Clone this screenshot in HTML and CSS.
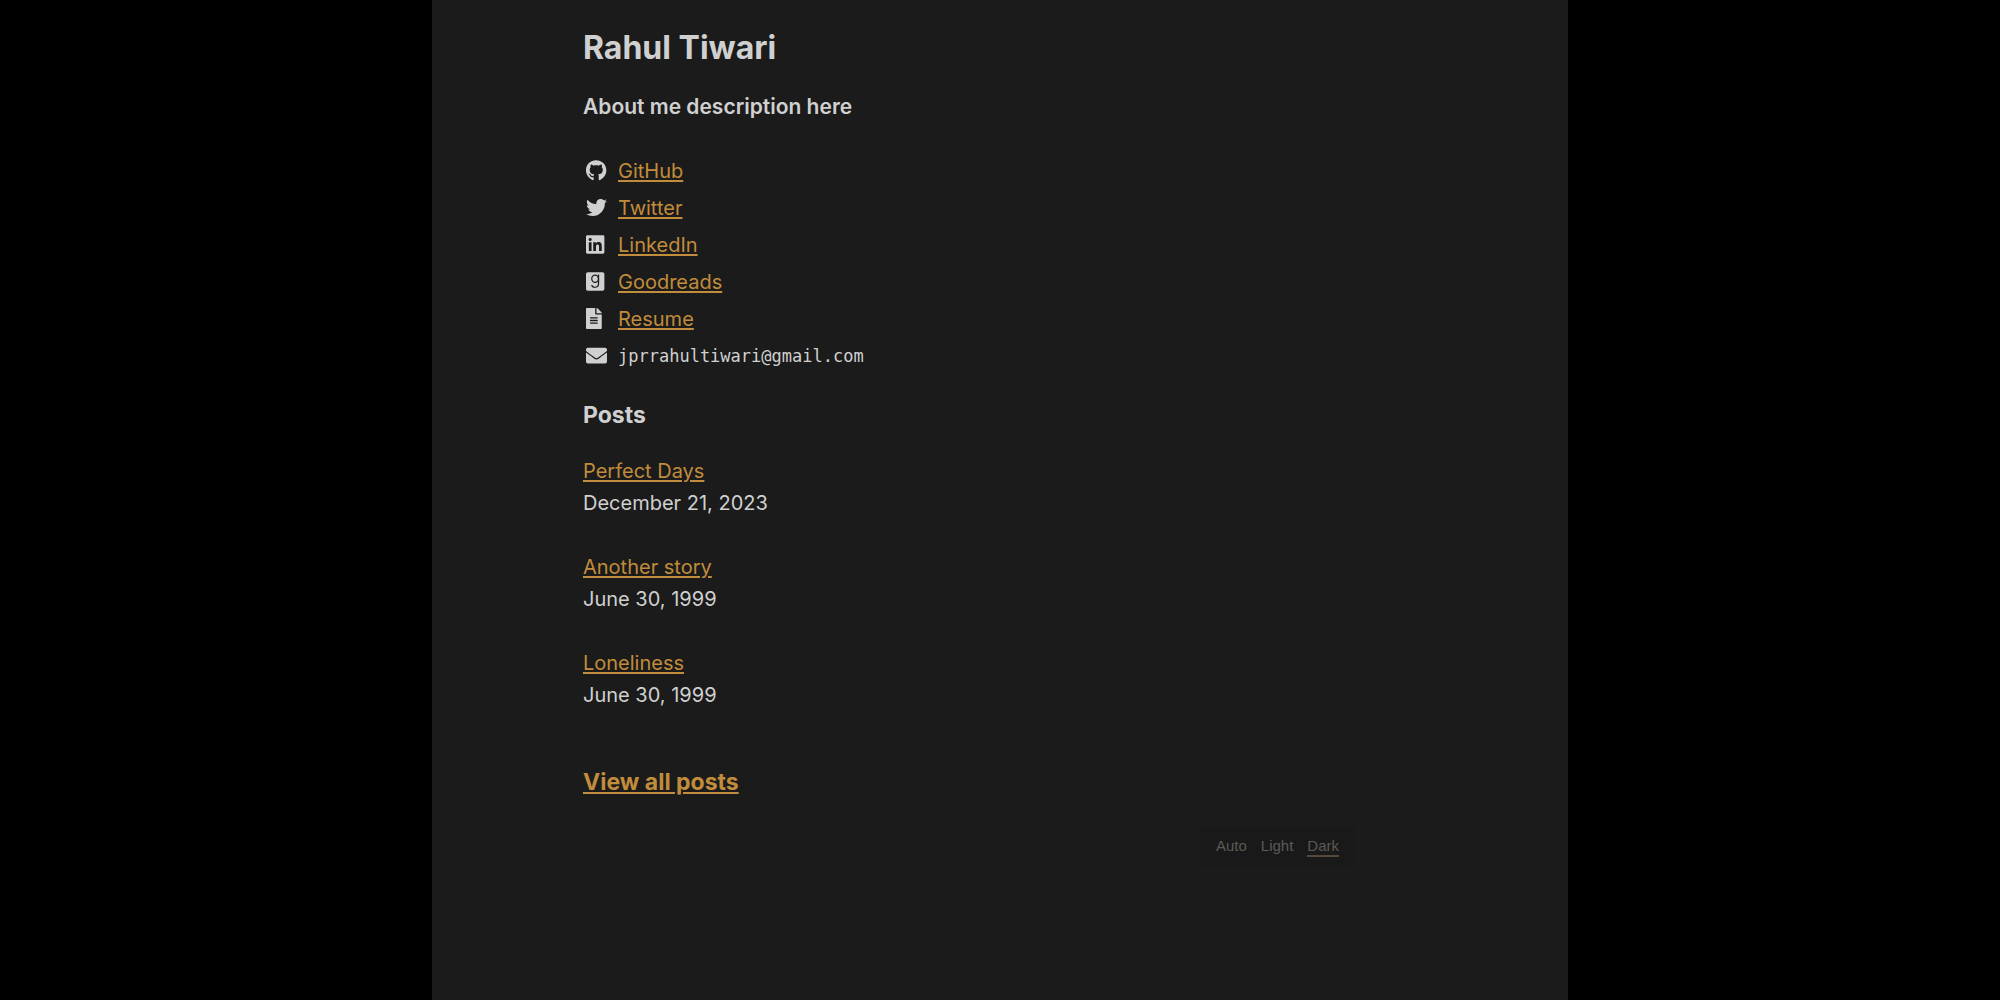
FILE: index.html
```html
<!DOCTYPE html>
<html lang="en">
<head>
<meta charset="utf-8">
<meta name="viewport" content="width=device-width, initial-scale=1">
<title>Rahul Tiwari</title>
<link rel="stylesheet" href="styles.css">
</head>
<body>
<div class="page">
  <main class="content">
    <h1 class="name">Rahul Tiwari</h1>
    <p class="about">About me description here</p>

    <ul class="contacts">
      <li class="contact">
        <svg class="icon" viewBox="0 0 512 512" aria-hidden="true"><path d="M165.900 397.400c0 2-2.300 3.600-5.200 3.600-3.300.3-5.600-1.300-5.600-3.600 0-2 2.300-3.600 5.200-3.600 3-.3 5.600 1.300 5.600 3.600zm-31.100-4.500c-.7 2 1.300 4.300 4.300 4.900 2.600 1 5.600 0 6.200-2s-1.300-4.300-4.300-5.200c-2.600-.7-5.500.3-6.200 2.300zm44.200-1.700c-2.900.7-4.900 2.600-4.600 4.900.3 2 2.900 3.300 5.900 2.600 2.900-.7 4.900-2.600 4.600-4.600-.3-1.900-3-3.200-5.900-2.900zM244.800 8C106.100 8 0 113.300 0 252c0 110.900 69.800 205.800 169.500 239.200 12.800 2.300 17.300-5.600 17.300-12.100 0-6.200-.3-40.400-.3-61.400 0 0-70 15-84.700-29.800 0 0-11.400-29.100-27.800-36.600 0 0-22.900-15.700 1.600-15.400 0 0 24.900 2 38.600 25.800 21.900 38.600 58.600 27.500 72.900 20.900 2.300-16 8.800-27.100 16-33.700-55.900-6.200-112.300-14.300-112.300-110.500 0-27.500 7.600-41.300 23.600-58.900-2.600-6.500-11.100-33.300 2.600-67.900 20.900-6.500 69 27 69 27 20-5.600 41.500-8.500 62.800-8.500s42.800 2.900 62.800 8.500c0 0 48.100-33.600 69-27 13.700 34.700 5.200 61.400 2.600 67.900 16 17.700 25.800 31.500 25.800 58.900 0 96.500-58.900 104.200-114.800 110.500 9.200 7.900 17 22.900 17 46.400 0 33.700-.3 75.400-.3 83.600 0 6.500 4.600 14.400 17.300 12.100C428.200 457.800 496 362.900 496 252 496 113.300 383.500 8 244.800 8z"/></svg>
        <a href="#github">GitHub</a>
      </li>
      <li class="contact">
        <svg class="icon" viewBox="0 0 512 512" aria-hidden="true"><path d="M459.370 151.716c.325 4.548.325 9.097.325 13.645 0 138.720-105.583 298.558-298.558 298.558-59.452 0-114.680-17.219-161.137-47.106 8.447.974 16.568 1.299 25.340 1.299 49.055 0 94.213-16.568 130.274-44.832-46.132-.975-84.792-31.188-98.112-72.772 6.498.974 12.995 1.624 19.818 1.624 9.421 0 18.843-1.300 27.614-3.573-48.081-9.747-84.143-51.980-84.143-102.985v-1.299c13.969 7.797 30.214 12.670 47.431 13.319-28.264-18.843-46.781-51.005-46.781-87.391 0-19.492 5.197-37.360 14.294-52.954 51.655 63.675 129.300 105.258 216.365 109.807-1.624-7.797-2.599-15.918-2.599-24.040 0-57.828 46.782-104.934 104.934-104.934 30.213 0 57.502 12.670 76.670 33.137 23.715-4.548 46.456-13.320 66.599-25.340-7.798 24.366-24.366 44.833-46.132 57.827 21.117-2.273 41.584-8.122 60.426-16.243-14.292 20.791-32.161 39.308-52.628 54.253z"/></svg>
        <a href="#twitter">Twitter</a>
      </li>
      <li class="contact">
        <svg class="icon" viewBox="0 0 512 512" aria-hidden="true"><path d="M416 32H31.900C14.300 32 0 46.500 0 64.300v383.400C0 465.500 14.300 480 31.900 480H416c17.600 0 32-14.500 32-32.300V64.300c0-17.800-14.400-32.300-32-32.300zM135.400 416H69V202.200h66.500V416zm-33.200-243c-21.300 0-38.500-17.300-38.500-38.500S80.900 96 102.200 96c21.200 0 38.500 17.300 38.500 38.500 0 21.300-17.200 38.500-38.500 38.500zm282.100 243h-66.400V312c0-24.800-.5-56.700-34.500-56.700-34.600 0-39.900 27-39.900 54.900V416h-66.400V202.200h63.700v29.200h.9c8.900-16.800 30.600-34.500 62.900-34.500 67.200 0 79.700 44.300 79.700 101.900V416z"/></svg>
        <a href="#linkedin">LinkedIn</a>
      </li>
      <li class="contact">
        <svg class="icon" viewBox="0 0 512 512" aria-hidden="true"><rect y="32" width="448" height="448" rx="44"/><g class="icon-cut"><ellipse cx="222" cy="190" rx="82" ry="88"/><path d="M306 88v216c0 62-30 92-84 92-48 0-78-20-82-56"/></g></svg>
        <a href="#goodreads">Goodreads</a>
      </li>
      <li class="contact">
        <svg class="icon" viewBox="0 0 512 512" aria-hidden="true"><path d="M224 136V0H24C10.700 0 0 10.700 0 24v464c0 13.300 10.700 24 24 24h336c13.300 0 24-10.700 24-24V160H248c-13.200 0-24-10.800-24-24zm64 236c0 6.600-5.400 12-12 12H108c-6.600 0-12-5.400-12-12v-8c0-6.600 5.400-12 12-12h168c6.600 0 12 5.400 12 12v8zm0-64c0 6.600-5.400 12-12 12H108c-6.600 0-12-5.400-12-12v-8c0-6.600 5.400-12 12-12h168c6.600 0 12 5.400 12 12v8zm0-72v8c0 6.600-5.400 12-12 12H108c-6.600 0-12-5.400-12-12v-8c0-6.600 5.400-12 12-12h168c6.600 0 12 5.400 12 12zm96-114.100v6.100H256V0h6.100c6.400 0 12.500 2.500 17 7l97.900 98c4.500 4.500 7 10.600 7 16.900z"/></svg>
        <a href="#resume">Resume</a>
      </li>
      <li class="contact">
        <svg class="icon" viewBox="0 0 512 512" aria-hidden="true"><path d="M502.300 190.800c3.900-3.100 9.700-.2 9.700 4.700V400c0 26.500-21.500 48-48 48H48c-26.500 0-48-21.500-48-48V195.600c0-5 5.700-7.800 9.700-4.700 22.400 17.400 52.100 39.500 154.100 113.600 21.100 15.400 56.700 47.800 92.200 47.600 35.700.3 72-32.800 92.300-47.600 102-74.100 131.600-96.300 154-113.700zM256 320c23.200.4 56.600-29.200 73.400-41.400 132.700-96.300 142.800-104.700 173.400-128.700 5.800-4.500 9.200-11.500 9.200-18.900v-19c0-26.500-21.500-48-48-48H48c-26.500 0-48 21.500-48 48v19c0 7.400 3.400 14.300 9.200 18.900 30.600 23.900 40.700 32.400 173.400 128.700 16.800 12.200 50.200 41.800 73.400 41.400z"/></svg>
        <code class="email">jprrahultiwari@gmail.com</code>
      </li>
    </ul>

    <h2 class="section-title">Posts</h2>
    <ul class="posts">
      <li><a href="#perfect-days">Perfect Days</a><br><time datetime="2023-12-21">December 21, 2023</time></li>
      <li><a href="#another-story">Another story</a><br><time datetime="1999-06-30">June 30, 1999</time></li>
      <li><a href="#loneliness">Loneliness</a><br><time datetime="1999-06-30">June 30, 1999</time></li>
    </ul>
    <p class="all-posts"><a href="#posts">View all posts</a></p>
  </main>

  <footer class="footer">
    <div class="theme" role="group" aria-label="Theme">
      <button class="theme-option" type="button">Auto</button>
      <button class="theme-option" type="button">Light</button>
      <button class="theme-option theme-option-active" type="button" aria-pressed="true">Dark</button>
    </div>
  </footer>
</div>
</body>
</html>
```
FILE: styles.css
```css
* {
  box-sizing: border-box;
}

body {
  margin: 0;
  background: #000;
  color: #d0d0d0;
  font: 20px/32px Inter, "Liberation Sans", sans-serif;
}

h1, h2, p, ul {
  margin: 0;
  padding: 0;
}

ul {
  list-style: none;
}

a {
  color: #c18c3b;
  text-decoration-thickness: 2px;
  text-underline-offset: 2px;
}

.page {
  max-width: 1136px;
  min-height: 100vh;
  margin: 0 auto;
  padding: 24px;
  background: #1b1b1b;
}

.content,
.footer {
  max-width: 834px;
  margin: 0 auto;
}

.name {
  margin-bottom: 19px;
  font-size: 32px;
  line-height: 48px;
}

.about {
  margin-bottom: 29px;
  font-size: 21px;
  font-weight: 600;
}

.contact {
  display: flex;
  align-items: center;
  gap: 11px;
  height: 37px;
  padding-left: 3px;
}

.icon {
  flex: none;
  width: 21px;
  height: 21px;
  fill: #d0d0d0;
}

.icon-cut {
  fill: none;
  stroke: #1b1b1b;
  stroke-width: 30px;
}

.email {
  font: 17px/32px "DejaVu Sans Mono", monospace;
}

.section-title {
  margin: 25px 0 24px;
  font-size: 23px;
  line-height: 32px;
}

.posts {
  display: grid;
  gap: 32px;
}

.all-posts {
  margin: 55px 0 28px;
  font-size: 23px;
  font-weight: 700;
}

.footer {
  display: flex;
  justify-content: flex-end;
  padding-right: 62px;
}

.theme {
  display: flex;
  gap: 14px;
  padding: 10px 16px;
  background: #191919;
}

.theme-option {
  padding: 0;
  border: 0;
  border-bottom: 2px solid transparent;
  background: none;
  color: #5c5a57;
  font: 15px/19px "Liberation Sans", sans-serif;
  cursor: pointer;
}

.theme-option-active {
  border-color: #55493a;
}
```
